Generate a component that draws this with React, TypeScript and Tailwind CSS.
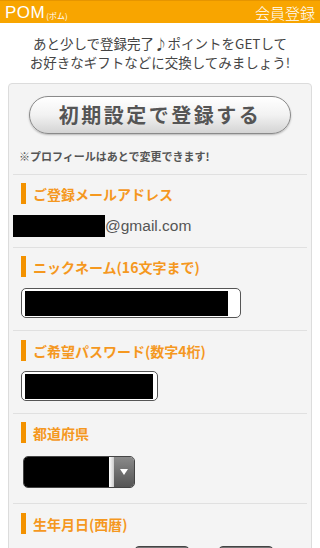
import React from 'react'

const jp = "font-['Noto_Sans_CJK_JP','Noto_Sans',sans-serif]"

function Label({ text }: { text: string }) {
  return (
    <div className="flex items-center gap-[7px] h-[21px]">
      <span className="w-[5px] h-[21px] bg-[#f39200]" />
      <span className="text-[14px] font-bold text-[#f5981f] leading-none">{text}</span>
    </div>
  )
}

export default function App() {
  return (
    <div className={`w-[320px] h-[548px] overflow-hidden bg-white ${jp}`}>
      <header className="h-[23px] bg-[#f8a500] border-t border-[#e69500] flex items-center justify-between px-[5px]">
        <div className="flex items-end text-white">
          <span className="text-[17px] leading-none font-['Liberation_Sans',sans-serif] tracking-[0.5px]">POM</span>
          <span className="text-[8px] leading-none mb-[1px] ml-[1px]">(ポム)</span>
        </div>
        <span className="text-white text-[15px] leading-none font-light">会員登録</span>
      </header>

      <p className="text-center text-[13.5px] leading-[19px] text-[#444] pt-[11px] pb-[11px]">
        あと少しで登録完了♪ポイントをGETして
        <br />
        お好きなギフトなどに交換してみましょう!
      </p>

      <div className="mx-[8px] bg-[#f4f4f4] border border-[#dcdcdc] rounded-t-[4px] px-[4px] pb-[10px]">
        <div className="pt-[12px] pb-[12px]">
          <div className="mx-[16px] h-[38px] rounded-full border border-[#8a8a8a] bg-gradient-to-b from-white via-[#f2f2f2] to-[#d4d4d4] shadow-[0_1px_2px_rgba(0,0,0,0.25)] flex items-center justify-center">
            <span className="text-[20px] font-bold text-[#555] tracking-[2.5px] leading-none">初期設定で登録する</span>
          </div>
          <p className="mt-[17px] ml-[6px] text-[11px] font-bold text-[#555] leading-none">※プロフィールはあとで変更できます!</p>
        </div>

        <section className="border-t border-[#e0e0e0] pt-[8px] pb-[10px] pl-[8px]">
          <Label text="ご登録メールアドレス" />
          <div className="mt-[11px] -ml-[8px] flex items-center h-[22px]">
            <span className="w-[92px] h-[22px] bg-black" />
            <span className="text-[15.5px] text-[#555] font-['Liberation_Sans',sans-serif]">@gmail.com</span>
          </div>
        </section>

        <section className="border-t border-[#e0e0e0] pt-[8px] pb-[12px] pl-[8px]">
          <Label text="ニックネーム(16文字まで)" />
          <div className="mt-[11px] w-[220px] h-[30px] rounded-[5px] border-[1.5px] border-[#555] bg-white flex items-center pl-[3px]">
            <span className="w-[203px] h-[25px] bg-black" />
          </div>
        </section>

        <section className="border-t border-[#e0e0e0] pt-[9px] pb-[12px] pl-[8px]">
          <Label text="ご希望パスワード(数字4桁)" />
          <div className="mt-[10px] w-[137px] h-[30px] rounded-[5px] border-[1.5px] border-[#555] bg-white flex items-center pl-[3px]">
            <span className="w-[128px] h-[25px] bg-black" />
          </div>
        </section>

        <section className="border-t border-[#e0e0e0] pt-[8px] pb-[15px] pl-[8px]">
          <Label text="都道府県" />
          <div className="mt-[13px] ml-[2px] w-[112px] h-[32px] rounded-[5px] border border-[#444] overflow-hidden flex">
            <span className="w-[85px] bg-black" />
            <span className="w-[5px] bg-gradient-to-r from-white to-[#ccc]" />
            <span className="flex-1 bg-gradient-to-b from-[#8a8a8a] to-[#555] flex items-center justify-center">
              <svg width="8" height="6" viewBox="0 0 8 6">
                <path d="M0 0 H8 L4 6 Z" fill="white" />
              </svg>
            </span>
          </div>
        </section>

        <section className="border-t border-[#e0e0e0] pt-[9px] pl-[8px]">
          <Label text="生年月日(西暦)" />
          <div className="mt-[12px] flex gap-[28px] pl-[113px]">
            <span className="w-[56px] h-[30px] rounded-[5px] border border-[#444] bg-gradient-to-b from-[#777] to-[#555]" />
            <span className="w-[56px] h-[30px] rounded-[5px] border border-[#444] bg-gradient-to-b from-[#777] to-[#555]" />
          </div>
        </section>
      </div>
    </div>
  )
}
